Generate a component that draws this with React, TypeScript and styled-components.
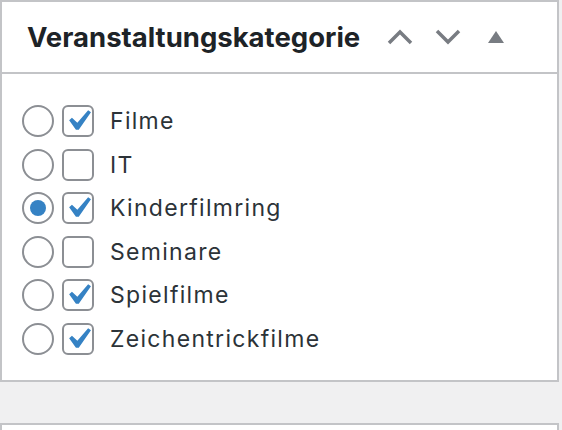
import * as React from 'react'
import styled, { createGlobalStyle } from 'styled-components'

const GlobalStyle = createGlobalStyle`
    html, body {
        margin: 0;
        padding: 0;
        background: #f0f0f1;
        font-family: Inter, "Liberation Sans", Arial, sans-serif;
    }
`

const Page = styled.div`
    width: 562px;
    height: 430px;
    overflow: hidden;
    display: flex;
    flex-direction: column;
    gap: 41px;
`

const Postbox = styled.div`
    width: 559px;
    box-sizing: border-box;
    background: #fff;
    border: 2px solid #c3c4c7;
`

const NextBox = styled(Postbox)`
    height: 20px;
    flex-shrink: 0;
`

const Header = styled.div`
    height: 72px;
    box-sizing: border-box;
    display: flex;
    align-items: center;
    justify-content: space-between;
    padding: 0 37px 0 25px;
    border-bottom: 2px solid #c3c4c7;
`

const Title = styled.h2`
    margin: 0;
    font-size: 27.5px;
    font-weight: 650;
    color: #1d2327;
`

const Actions = styled.div`
    display: flex;
    align-items: center;
    color: #787c82;
`

const IconButton = styled.span`
    display: flex;
    align-items: center;
    justify-content: center;
    width: 48px;
    height: 30px;
`

const Inside = styled.ul`
    list-style: none;
    margin: 0;
    padding: 31px 20px 25px 20px;
    display: flex;
    flex-direction: column;
    gap: 11.6px;
`

const Row = styled.li`
    display: flex;
    align-items: center;
    height: 32px;
`

const Radio = styled.span<{ checked?: boolean }>`
    width: 32px;
    height: 32px;
    box-sizing: border-box;
    border: 2px solid #8c8f94;
    border-radius: 50%;
    display: flex;
    align-items: center;
    justify-content: center;
    &::after {
        content: "";
        display: ${p => (p.checked ? 'block' : 'none')};
        width: 16px;
        height: 16px;
        border-radius: 50%;
        background: #3582c4;
    }
`

const Checkbox = styled.span`
    width: 32px;
    height: 32px;
    margin-left: 8px;
    box-sizing: border-box;
    border: 2px solid #8c8f94;
    border-radius: 6px;
    display: flex;
    align-items: center;
    justify-content: center;
    color: #3582c4;
`

const Label = styled.span`
    margin-left: 16px;
    font-size: 23px;
    letter-spacing: 1.3px;
    color: #2c3338;
`

const items = [
    { name: 'Filme', checked: true, primary: false },
    { name: 'IT', checked: false, primary: false },
    { name: 'Kinderfilmring', checked: true, primary: true },
    { name: 'Seminare', checked: false, primary: false },
    { name: 'Spielfilme', checked: true, primary: false },
    { name: 'Zeichentrickfilme', checked: true, primary: false },
]

const Check = () => (
    <svg width="42" height="42" viewBox="0 0 20 20" fill="currentColor" style={{ flexShrink: 0 }}>
        <path d="M14.83 4.89l1.34.94-5.81 8.38H9.02L5.78 9.67l1.34-1.25 2.57 2.4z" />
    </svg>
)

const App = () => (
    <>
        <GlobalStyle />
        <Page>
            <Postbox>
                <Header>
                    <Title>Veranstaltungskategorie</Title>
                    <Actions>
                        <IconButton>
                            <svg width="26" height="16" viewBox="0 0 26 16">
                                <path d="M2 14 L13 3 L24 14" fill="none" stroke="currentColor" strokeWidth="3.5" />
                            </svg>
                        </IconButton>
                        <IconButton>
                            <svg width="26" height="16" viewBox="0 0 26 16">
                                <path d="M2 2 L13 13 L24 2" fill="none" stroke="currentColor" strokeWidth="3.5" />
                            </svg>
                        </IconButton>
                        <IconButton>
                            <svg width="16" height="12" viewBox="0 0 16 12">
                                <path d="M8 0 L16 12 L0 12 Z" fill="currentColor" />
                            </svg>
                        </IconButton>
                    </Actions>
                </Header>
                <Inside>
                    {items.map(item => (
                        <Row key={item.name}>
                            <Radio checked={item.primary} />
                            <Checkbox>{item.checked && <Check />}</Checkbox>
                            <Label>{item.name}</Label>
                        </Row>
                    ))}
                </Inside>
            </Postbox>
            <NextBox />
        </Page>
    </>
)

export default App
